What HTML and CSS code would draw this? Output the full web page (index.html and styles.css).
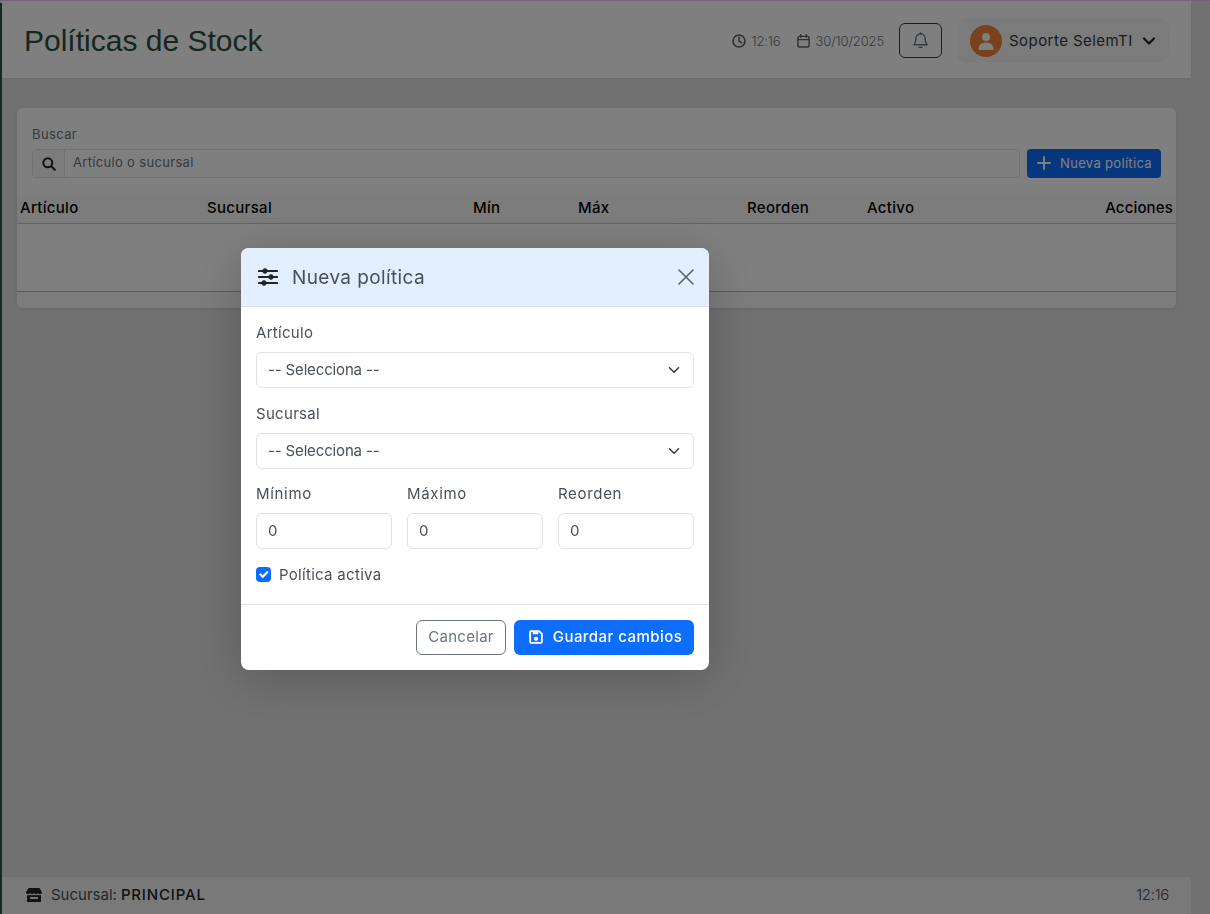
FILE: index.html
```html
<!DOCTYPE html>
<html lang="es">
<head>
    <meta charset="UTF-8" />
    <title>Políticas de Stock</title>
    <link rel="stylesheet" href="styles.css">
</head>
<body>
    <div class="top-strip"></div>
    <div class="layout">
        <aside class="sidebar"></aside>
        <div class="main">
            <header class="topbar">
                <h1>Políticas de Stock</h1>
                <div class="topbar-right">
                    <span class="meta">
                        <svg width="14" height="14" viewBox="0 0 16 16" fill="none" stroke="currentColor" stroke-width="1.8" stroke-linecap="round" stroke-linejoin="round"><circle cx="8" cy="8" r="6.8"/><path d="M8 3.8V8l2.8 1.8"/></svg>
                        12:16
                    </span>
                    <span class="meta">
                        <svg width="13" height="14" viewBox="0 0 14 15" fill="none" stroke="currentColor" stroke-width="1.5" stroke-linecap="round"><rect x="1" y="2.5" width="12" height="11.5" rx="1.6"/><path d="M1 6h12M4 .8v2.6M10 .8v2.6"/></svg>
                        30/10/2025
                    </span>
                    <button class="bell-btn" aria-label="Notificaciones">
                        <svg width="15" height="17" viewBox="0 0 15 17" fill="none" stroke="currentColor" stroke-width="1.4" stroke-linejoin="round" stroke-linecap="round"><path d="M7.5 1.8a4.6 4.6 0 0 0-4.6 4.6c0 3.6-1 5.2-2 6.4h13.200c-1-1.200-2-2.800-2-6.400a4.600 4.600 0 0 0-4.600-4.600z"/><path d="M7.500.8v1M6 15.400h3"/></svg>
                    </button>
                    <div class="user-pill">
                        <span class="avatar">
                            <svg width="18" height="18" viewBox="0 0 18 18" fill="currentColor"><circle cx="9" cy="5" r="4"/><path d="M1.500 17c0-4 3-6.500 7.500-6.500s7.500 2.500 7.500 6.500c0 .6-.4 1-1 1h-13c-.6 0-1-.4-1-1z"/></svg>
                        </span>
                        <span class="user-name">Soporte SelemTI</span>
                        <svg width="14" height="10" viewBox="0 0 14 10" fill="none" stroke="currentColor" stroke-width="2.200" stroke-linecap="round" stroke-linejoin="round"><path d="M2 2.500l5 5 5-5"/></svg>
                    </div>
                </div>
            </header>

            <main class="content">
                <section class="card">
                    <div class="toolbar">
                        <div class="search">
                            <label class="search-label" for="buscar">Buscar</label>
                            <div class="input-group">
                                <span class="input-addon">
                                    <svg width="14" height="14" viewBox="0 0 14 14" fill="none" stroke="currentColor" stroke-width="2" stroke-linecap="round"><circle cx="5.800" cy="5.800" r="4.500"/><path d="M9.200 9.200l3.600 3.600"/></svg>
                                </span>
                                <input id="buscar" type="text" placeholder="Artículo o sucursal" />
                            </div>
                        </div>
                        <button class="btn-new">
                            <svg width="14" height="14" viewBox="0 0 14 14" stroke="currentColor" stroke-width="2" stroke-linecap="round"><path d="M7 1v12M1 7h12"/></svg>
                            Nueva política
                        </button>
                    </div>
                    <table class="grid">
                        <thead>
                            <tr>
                                <th class="col-art">Artículo</th>
                                <th class="col-suc">Sucursal</th>
                                <th class="col-min">Mín</th>
                                <th class="col-max">Máx</th>
                                <th class="col-reo">Reorden</th>
                                <th class="col-act">Activo</th>
                                <th class="col-acc">Acciones</th>
                            </tr>
                        </thead>
                        <tbody>
                            <tr><td colspan="7"></td></tr>
                        </tbody>
                    </table>
                    <div class="card-end"></div>
                </section>
            </main>

            <footer class="footer">
                <span class="branch">
                    <svg width="16" height="14" viewBox="0 0 16 14" fill="currentColor"><path d="M2.500 0h11L16 4.200C16 5.500 15 6.200 14 6.200s-1.700-.5-2-1.200c-.4.700-1.100 1.200-2 1.200S8.400 5.700 8 5c-.4.700-1.100 1.200-2 1.200S4.400 5.700 4 5c-.3.700-1 1.200-2 1.200S0 5.500 0 4.200z"/><path d="M1 7.200c.9.300 2.200.1 3-.5.600.4 1.300.6 2 .6s1.400-.2 2-.6c.6.400 1.300.6 2 .6s1.400-.2 2-.6c.8.600 2.100.8 3 .5V13c0 .6-.4 1-1 1H2c-.6 0-1-.4-1-1zM4 9v2h8V9z"/></svg>
                    Sucursal: <strong>PRINCIPAL</strong>
                </span>
                <span class="footer-time">12:16</span>
            </footer>
        </div>
    </div>

    <div class="overlay">
        <div class="modal">
            <div class="modal-head">
                <svg width="20" height="18" viewBox="0 0 20 18" fill="currentColor" stroke="currentColor"><path d="M1 3h18M1 9h18M1 15h18" stroke-width="2.200" stroke-linecap="round"/><circle cx="7" cy="3" r="2.300"/><circle cx="13" cy="9" r="2.300"/><circle cx="6" cy="15" r="2.300"/></svg>
                <h2>Nueva política</h2>
                <button class="modal-close" aria-label="Cerrar">
                    <svg width="16" height="16" viewBox="0 0 16 16" stroke="currentColor" stroke-width="1.600" stroke-linecap="round"><path d="M1 1l14 14M15 1L1 15"/></svg>
                </button>
            </div>
            <div class="modal-body">
                <div class="field">
                    <label for="articulo">Artículo</label>
                    <select id="articulo"><option>-- Selecciona --</option></select>
                </div>
                <div class="field">
                    <label for="sucursal">Sucursal</label>
                    <select id="sucursal"><option>-- Selecciona --</option></select>
                </div>
                <div class="field-row">
                    <div class="field">
                        <label for="minimo">Mínimo</label>
                        <input id="minimo" type="text" value="0" />
                    </div>
                    <div class="field">
                        <label for="maximo">Máximo</label>
                        <input id="maximo" type="text" value="0" />
                    </div>
                    <div class="field">
                        <label for="reorden">Reorden</label>
                        <input id="reorden" type="text" value="0" />
                    </div>
                </div>
                <label class="check">
                    <input type="checkbox" checked />
                    Política activa
                </label>
            </div>
            <div class="modal-foot">
                <button class="btn-cancel">Cancelar</button>
                <button class="btn-save">
                    <svg width="14" height="14" viewBox="0 0 15 15"><path fill="none" stroke="currentColor" stroke-width="2" stroke-linejoin="round" d="M2.200 1.200h8.600l3 3v8.100a1.500 1.500 0 0 1-1.500 1.500H2.700a1.500 1.500 0 0 1-1.500-1.500V1.700z"/><path fill="currentColor" d="M4 1h6v3.500H4z"/><circle fill="currentColor" cx="7.500" cy="9.500" r="2.300"/></svg>
                    Guardar cambios
                </button>
            </div>
        </div>
    </div>
</body>
</html>
```

FILE: styles.css
```css
* {
    box-sizing: border-box;
}
html, body {
    height: 100%;
}
body {
    margin: 0;
    font-family: Inter, "Noto Sans", sans-serif;
    font-size: 15px;
    color: #212529;
    background: #e2e2e2;
    overflow: hidden;
}
button, input, select {
    font-family: inherit;
}

.top-strip {
    height: 1px;
    background: #f3c6ec;
}
.layout {
    display: flex;
    height: calc(100% - 1px);
}
.sidebar {
    width: 2px;
    margin-top: 2px;
    background: #2f5243;
}
.main {
    width: 1189px;
    display: flex;
    flex-direction: column;
}

.topbar {
    height: 77px;
    padding: 2px 22px 0 22px;
    display: flex;
    align-items: center;
    justify-content: space-between;
    background: #fff;
    box-shadow: 0 1px 3px rgba(0, 0, 0, .06);
}
.topbar h1 {
    margin: 0;
    font-family: "Liberation Sans", Arial, sans-serif;
    font-size: 30px;
    font-weight: 400;
    color: #2c4f3f;
}
.topbar-right {
    display: flex;
    align-items: center;
}
.meta {
    display: flex;
    align-items: center;
    gap: 5px;
    margin-right: 17px;
    font-size: 13px;
    font-weight: 300;
    letter-spacing: -.01em;
    color: #6c757d;
}
.meta svg {
    color: #5b6066;
}
.meta + .meta {
    margin-right: 15px;
}
.bell-btn {
    width: 43px;
    height: 35px;
    margin-right: 15px;
    display: flex;
    align-items: center;
    justify-content: center;
    padding: 0;
    background: transparent;
    border: 1px solid #343a40;
    border-radius: 6px;
    color: #6c757d;
}
.user-pill {
    width: 212px;
    height: 45px;
    padding: 0 13px;
    display: flex;
    align-items: center;
    gap: 7px;
    background: #f6f6f6;
    border-radius: 10px;
}
.avatar {
    width: 32px;
    height: 32px;
    border-radius: 50%;
    display: flex;
    align-items: center;
    justify-content: center;
    background: #f28438;
    color: #fff;
}
.user-name {
    flex: 1;
    font-size: 15px;
    letter-spacing: .03em;
    color: #343a40;
}

.content {
    flex: 1;
    padding: 30px 15px 0;
}
.card {
    height: 200px;
    background: #fff;
    border-radius: 6px;
    box-shadow: 0 1px 3px rgba(0, 0, 0, .1);
    display: flex;
    flex-direction: column;
}
.toolbar {
    display: flex;
    align-items: flex-end;
    gap: 7px;
    padding: 18px 15px 15px;
}
.search {
    flex: 1;
}
.search-label {
    display: block;
    margin-bottom: 7px;
    font-size: 13px;
    letter-spacing: .03em;
    color: #6c757d;
}
.input-group {
    display: flex;
    height: 29px;
    border: 1px solid #dee2e6;
    border-radius: 4px;
}
.input-addon {
    width: 32px;
    display: flex;
    align-items: center;
    justify-content: center;
    background: #f8f9fa;
    border-right: 1px solid #dee2e6;
    color: #212529;
}
.input-group input {
    flex: 1;
    min-width: 0;
    padding: 0 8px 3px;
    border: 0;
    outline: 0;
    background: transparent;
    font-size: 13px;
    letter-spacing: .025em;
}
.input-group input::placeholder {
    color: #6c757d;
    opacity: 1;
}
.btn-new {
    width: 134px;
    height: 29px;
    padding: 0 0 2px 1px;
    display: flex;
    align-items: center;
    justify-content: center;
    gap: 9px;
    background: #0d6efd;
    border: 0;
    border-radius: 4px;
    color: #fff;
    font-size: 13px;
    letter-spacing: .025em;
}

.grid {
    width: 100%;
    border-collapse: collapse;
    table-layout: fixed;
}
.grid th {
    height: 30px;
    padding: 0 3px;
    text-align: left;
    font-size: 15px;
    font-weight: 500;
    letter-spacing: .02em;
    color: #000;
    background: #f8f9fa;
    border-bottom: 1px solid #c8c8c8;
}
.grid td {
    height: 68px;
    padding: 0;
    border-bottom: 1px solid #b4b4b4;
}
.col-art { width: 187px; }
.col-suc { width: 266px; }
.col-min { width: 105px; }
.col-max { width: 169px; }
.col-reo { width: 120px; }
.grid .col-acc { text-align: right; letter-spacing: .01em; }
.card-end {
    flex: 1;
    background: #f8f9fa;
    border-radius: 0 0 6px 6px;
}

.footer {
    height: 37px;
    padding: 0 22px 2px 24px;
    display: flex;
    align-items: center;
    justify-content: space-between;
    background: #f3f3f3;
    font-size: 15px;
    color: #495057;
}
.branch {
    display: flex;
    align-items: center;
    gap: 4px;
}
.branch svg {
    margin-right: 5px;
    color: #212529;
}
.branch strong {
    font-weight: 500;
    letter-spacing: .055em;
    color: #212529;
}
.footer-time {
    font-weight: 300;
    letter-spacing: -.02em;
}

.overlay {
    position: fixed;
    inset: 0;
    padding: 4px 260px 0 0;
    display: flex;
    align-items: center;
    justify-content: center;
    background: rgba(0, 0, 0, .5);
}
.modal {
    width: 468px;
    background: #fff;
    border-radius: 8px;
    overflow: hidden;
    box-shadow: 0 8px 50px rgba(0, 0, 0, .2);
}
.modal-head {
    height: 59px;
    padding: 0 15px 0 17px;
    display: flex;
    align-items: center;
    gap: 14px;
    background: #e3eeff;
    border-bottom: 1px solid #dee2e6;
    color: #212529;
}
.modal-head h2 {
    flex: 1;
    margin: 0;
    font-size: 19px;
    font-weight: 400;
    letter-spacing: .02em;
    color: #495057;
}
.modal-close {
    padding: 0;
    display: flex;
    background: none;
    border: 0;
    color: #5c6268;
}
.modal-body {
    padding: 16px 15px 0;
    height: 297px;
}
.field {
    margin-bottom: 16px;
}
.field label {
    display: block;
    margin-bottom: 9px;
    font-size: 15px;
    line-height: 20px;
    letter-spacing: .02em;
    color: #495057;
}
.field select, .field input {
    display: block;
    width: 100%;
    height: 36px;
    padding: 0 11px 2px;
    background-color: #fff;
    border: 1px solid #dee2e6;
    border-radius: 6px;
    font-size: 15px;
    letter-spacing: -.01em;
    color: #495057;
    outline: 0;
}
.field select {
    appearance: none;
    background-image: url("data:image/svg+xml,%3Csvg xmlns='http://www.w3.org/2000/svg' viewBox='0 0 16 16'%3E%3Cpath fill='none' stroke='%23343a40' stroke-linecap='round' stroke-linejoin='round' stroke-width='2' d='m2 5 6 6 6-6'/%3E%3C/svg%3E");
    background-repeat: no-repeat;
    background-position: right 13px center;
    background-size: 12px 12px;
}
.field-row {
    margin-top: -1px;
    display: grid;
    grid-template-columns: repeat(3, 1fr);
    gap: 15px;
}
.field-row .field label {
    letter-spacing: .045em;
}
.check {
    display: flex;
    align-items: center;
    gap: 8px;
    font-size: 15px;
    letter-spacing: .02em;
    color: #495057;
}
.check input {
    appearance: none;
    width: 15px;
    height: 15px;
    margin: 0;
    border-radius: 4px;
    background: #0d6efd url("data:image/svg+xml,%3Csvg xmlns='http://www.w3.org/2000/svg' viewBox='0 0 20 20'%3E%3Cpath fill='none' stroke='%23fff' stroke-linecap='round' stroke-linejoin='round' stroke-width='3' d='m6 10 3 3 6-6'/%3E%3C/svg%3E") center / 100% no-repeat;
}
.modal-foot {
    height: 66px;
    padding: 15px 15px 0;
    display: flex;
    justify-content: flex-end;
    gap: 8px;
    border-top: 1px solid #dee2e6;
}
.modal-foot button {
    height: 35px;
    padding: 0 0 2px;
    border-radius: 6px;
    font-size: 15px;
    letter-spacing: .02em;
}
.btn-cancel {
    width: 90px;
    background: #fff;
    border: 1px solid #6c757d;
    color: #6c757d;
}
.modal-foot .btn-save {
    width: 180px;
    padding-left: 3px;
    display: flex;
    align-items: center;
    justify-content: center;
    gap: 10px;
    background: #0d6efd;
    border: 0;
    color: #fff;
    font-weight: 500;
    letter-spacing: .03em;
}
```
